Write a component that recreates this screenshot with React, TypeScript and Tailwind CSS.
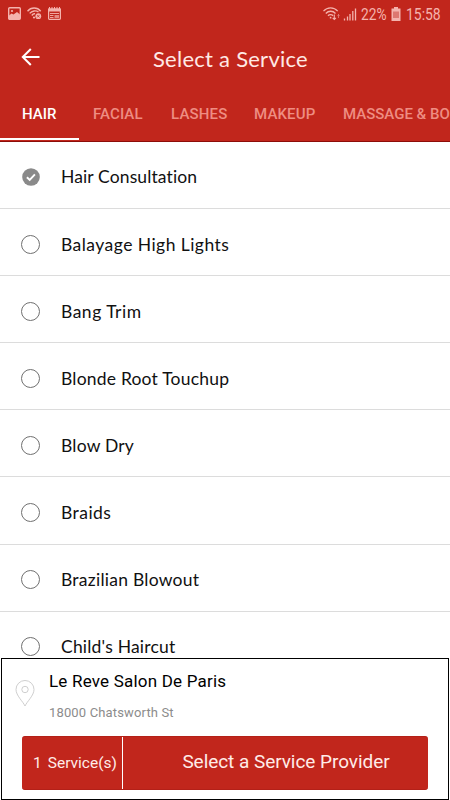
import clsx from 'clsx';

const TABS = [
  { name: 'HAIR', pad: 'pl-[22px] w-[79px]' },
  { name: 'FACIAL', pad: 'pl-[14px] w-[78px] tracking-[0.1px]' },
  { name: 'LASHES', pad: 'pl-[14px] w-[83px] tracking-[0.15px]' },
  { name: 'MAKEUP', pad: 'pl-[14px] w-[89px] tracking-[0.15px]' },
  { name: 'MASSAGE & BODY', pad: 'pl-[14px] w-[160px]' },
];

const SERVICES = [
  { name: 'Hair Consultation', tracking: 'tracking-[0.12px]' },
  { name: 'Balayage High Lights', tracking: 'tracking-[0.45px]' },
  { name: 'Bang Trim', tracking: 'tracking-[0.5px]' },
  { name: 'Blonde Root Touchup', tracking: 'tracking-[0.2px]' },
  { name: 'Blow Dry', tracking: 'tracking-[0.2px]' },
  { name: 'Braids', tracking: 'tracking-[0.45px]' },
  { name: 'Brazilian Blowout', tracking: 'tracking-[0.25px]' },
  { name: "Child's Haircut", tracking: 'tracking-[0.2px]' },
];

function StatusBar() {
  return (
    <div className="flex h-7 items-center justify-between pl-2 pr-[9px] text-[#f4b3ad]">
      <div className="flex items-center gap-[6px] pb-0.5">
        <svg width="13" height="13" viewBox="0 0 13 13" fill="none">
          <rect x="0.7" y="0.7" width="11.6" height="11.6" rx="1" stroke="currentColor" strokeWidth="1.4" />
          <path d="M1 8.5 3.5 6.5 5.5 7.500 9 5l3 2.500V12H1z" fill="currentColor" />
          <circle cx="4" cy="4" r="1.1" fill="currentColor" />
        </svg>
        <svg width="15" height="13" viewBox="0 0 15 13" fill="none" stroke="currentColor" strokeWidth="1.4">
          <path d="M.5 4.2C4-.1 10.3-.1 13.7 4.2M2.7 6.4C5 3.5 9 3.2 11.5 5M4.8 8.5C5.8 7.1 7.2 6.600 8 6.800" />
          <circle cx="7" cy="10.5" r="1.100" fill="currentColor" stroke="none" />
          <circle cx="11.3" cy="9.2" r="2.9" fill="currentColor" stroke="none" />
          <path d="m10 7.900 2.600 2.600M12.600 7.900 10 10.500" stroke="#c1261c" strokeWidth="0.7" />
        </svg>
        <svg width="13" height="13" viewBox="0 0 13 13" fill="none">
          <path d="M1.5 0v2M4 0v2M6.5 0v2M9 0v2M11.5 0v2" stroke="currentColor" />
          <rect x="0.6" y="2" width="11.8" height="10.3" rx="0.8" stroke="currentColor" strokeWidth="1.2" />
          <path d="M0 1.500h13v3H0z" fill="currentColor" />
          <path d="M2 6.500h9M2 8.500h3.500M2 10.500h3.500" stroke="currentColor" strokeWidth="0.900" />
          <path d="M6.500 8h4.500v3H6.500z" fill="currentColor" fillOpacity="0.7" />
        </svg>
      </div>
      <div className="flex items-center">
        <svg width="18" height="14" viewBox="0 0 18 14" fill="none" stroke="currentColor" strokeWidth="1.3">
          <path d="M.5 4.2C4.3-.2 10.9-.2 14.7 4.2M2.8 6.5c2.7-3 7-3 9.7 0M5 8.7c1.4-1.5 3.7-1.5 5.1 0" />
          <path d="M11.3 7.5v5M9.7 10.8l1.6 1.7 1.6-1.7" strokeWidth="1.1" />
          <path d="M15.5 11V7.5M14.500 8.7l1-1.2 1 1.2" strokeWidth="0.9" opacity="0.6" />
          <circle cx="7.6" cy="10.7" r="0.9" fill="currentColor" stroke="none" />
        </svg>
        <svg className="ml-[2px]" width="14" height="14" viewBox="0 0 14 14" stroke="currentColor" strokeWidth="1.300">
          <path d="M1.5 13.500v-2M4.500 13.500V9.500M7 13.500V7M9.800 13.500V4M12.500 13.500V1.500" />
        </svg>
        <span className="ml-1 w-[26px] origin-left scale-x-[0.86] whitespace-nowrap pt-px text-[16px] leading-none">22%</span>
        <svg className="ml-1 mb-px" width="10" height="14" viewBox="0 0 10 14">
          <path d="M3 0h4v1.500h2.500V14H.5V1.500H3z" fill="currentColor" />
          <path d="M2 4.500h6v6.500H2z" fill="#dd7770" />
        </svg>
        <span className="ml-[5px] w-[35px] origin-left scale-x-[0.87] whitespace-nowrap pt-px text-[16px] leading-none">15:58</span>
      </div>
    </div>
  );
}

function Radio({ checked }: { checked: boolean }) {
  if (checked) {
    return (
      <svg className="-mt-px" width="18" height="18" viewBox="0 0 18 18" fill="none">
        <circle cx="9" cy="9" r="8.8" fill="#8a8a8a" />
        <path d="m4.900 9.300 2.800 2.700 5.200-5.600" stroke="#fff" strokeWidth="1.900" />
      </svg>
    );
  }
  return <span className="block size-[19px] rounded-full border border-[#707070]" />;
}

export default function App() {
  return (
    <div className="flex h-[800px] w-[450px] flex-col overflow-hidden bg-white font-['Roboto',sans-serif]">
      <header className="h-[142px] shrink-0 border-b border-[#8d0d09] bg-[#c1261c]">
        <StatusBar />
        <div className="grid h-[60px] grid-cols-[78px_1fr_66px] items-center">
          <svg className="mb-[2px] ml-[21px]" width="19" height="18" viewBox="0 0 19 18" fill="none" stroke="#fff" strokeWidth="2">
            <path d="M18.500 9H2M9.800 1 1.800 9l8 8" />
          </svg>
          <h1 className="pl-[75px] font-['Lato',sans-serif] text-[22px] tracking-[0.25px] whitespace-nowrap text-[#ffe9e5]">Select a Service</h1>
        </div>
        <nav className="flex h-[53px] overflow-hidden">
          {TABS.map((tab, i) => (
            <div
              key={tab.name}
              className={clsx(
                'flex h-[52px] shrink-0 items-center whitespace-nowrap border-b-2 pt-[3px] text-[15px] font-medium',
                tab.pad,
                i === 0 ? 'border-white text-white' : 'border-transparent text-[#ee8d82]',
              )}
            >
              {tab.name}
            </div>
          ))}
        </nav>
      </header>

      <ul className="min-h-0 flex-1 overflow-hidden">
        {SERVICES.map((s, i) => (
          <li key={s.name} className="flex h-[67.1px] items-center border-b border-[#dcdcdc] pt-[4px]">
            <div className="flex w-[61px] justify-center">
              <Radio checked={i === 0} />
            </div>
            <span className={clsx("pt-px font-['Lato',sans-serif] text-[17.5px] text-[#111]", s.tracking)}>{s.name}</span>
          </li>
        ))}
      </ul>

      <section className="mx-px h-[142px] shrink-0 border border-black bg-white">
        <div className="flex h-[77px]">
          <svg className="ml-[13px] mt-[21px]" width="20" height="27" viewBox="0 0 20 27" fill="none" stroke="#cfcfcf">
            <path d="M10 26C8 21.500 1 15.500 1 9.500a9 9 0 0 1 18 0C19 15.500 12 21.500 10 26z" />
            <circle cx="10" cy="9.500" r="3.200" />
          </svg>
          <div className="ml-[14px] pt-[11px]">
            <h2 className="text-[17px] leading-[22px] tracking-[0.2px] text-black">Le Reve Salon De Paris</h2>
            <p className="mt-[13px] text-[13px] leading-4 tracking-[0.15px] text-[#8c8c8c]">18000 Chatsworth St</p>
          </div>
        </div>
        <div className="ml-5 flex h-[54px] w-[406px] overflow-hidden rounded-[3px] border-y border-[#b32018] bg-[#c1261c] text-[#ffece8]">
          <div className="flex w-[101px] items-center gap-[6px] whitespace-nowrap border-r border-white pl-[11px] pt-px text-[15.5px]">
            <span>1</span>
            <span>Service(s)</span>
          </div>
          <button className="flex-1 pb-px pl-[21px] text-[19px] tracking-[-0.05px]">Select a Service Provider</button>
        </div>
      </section>
    </div>
  );
}
